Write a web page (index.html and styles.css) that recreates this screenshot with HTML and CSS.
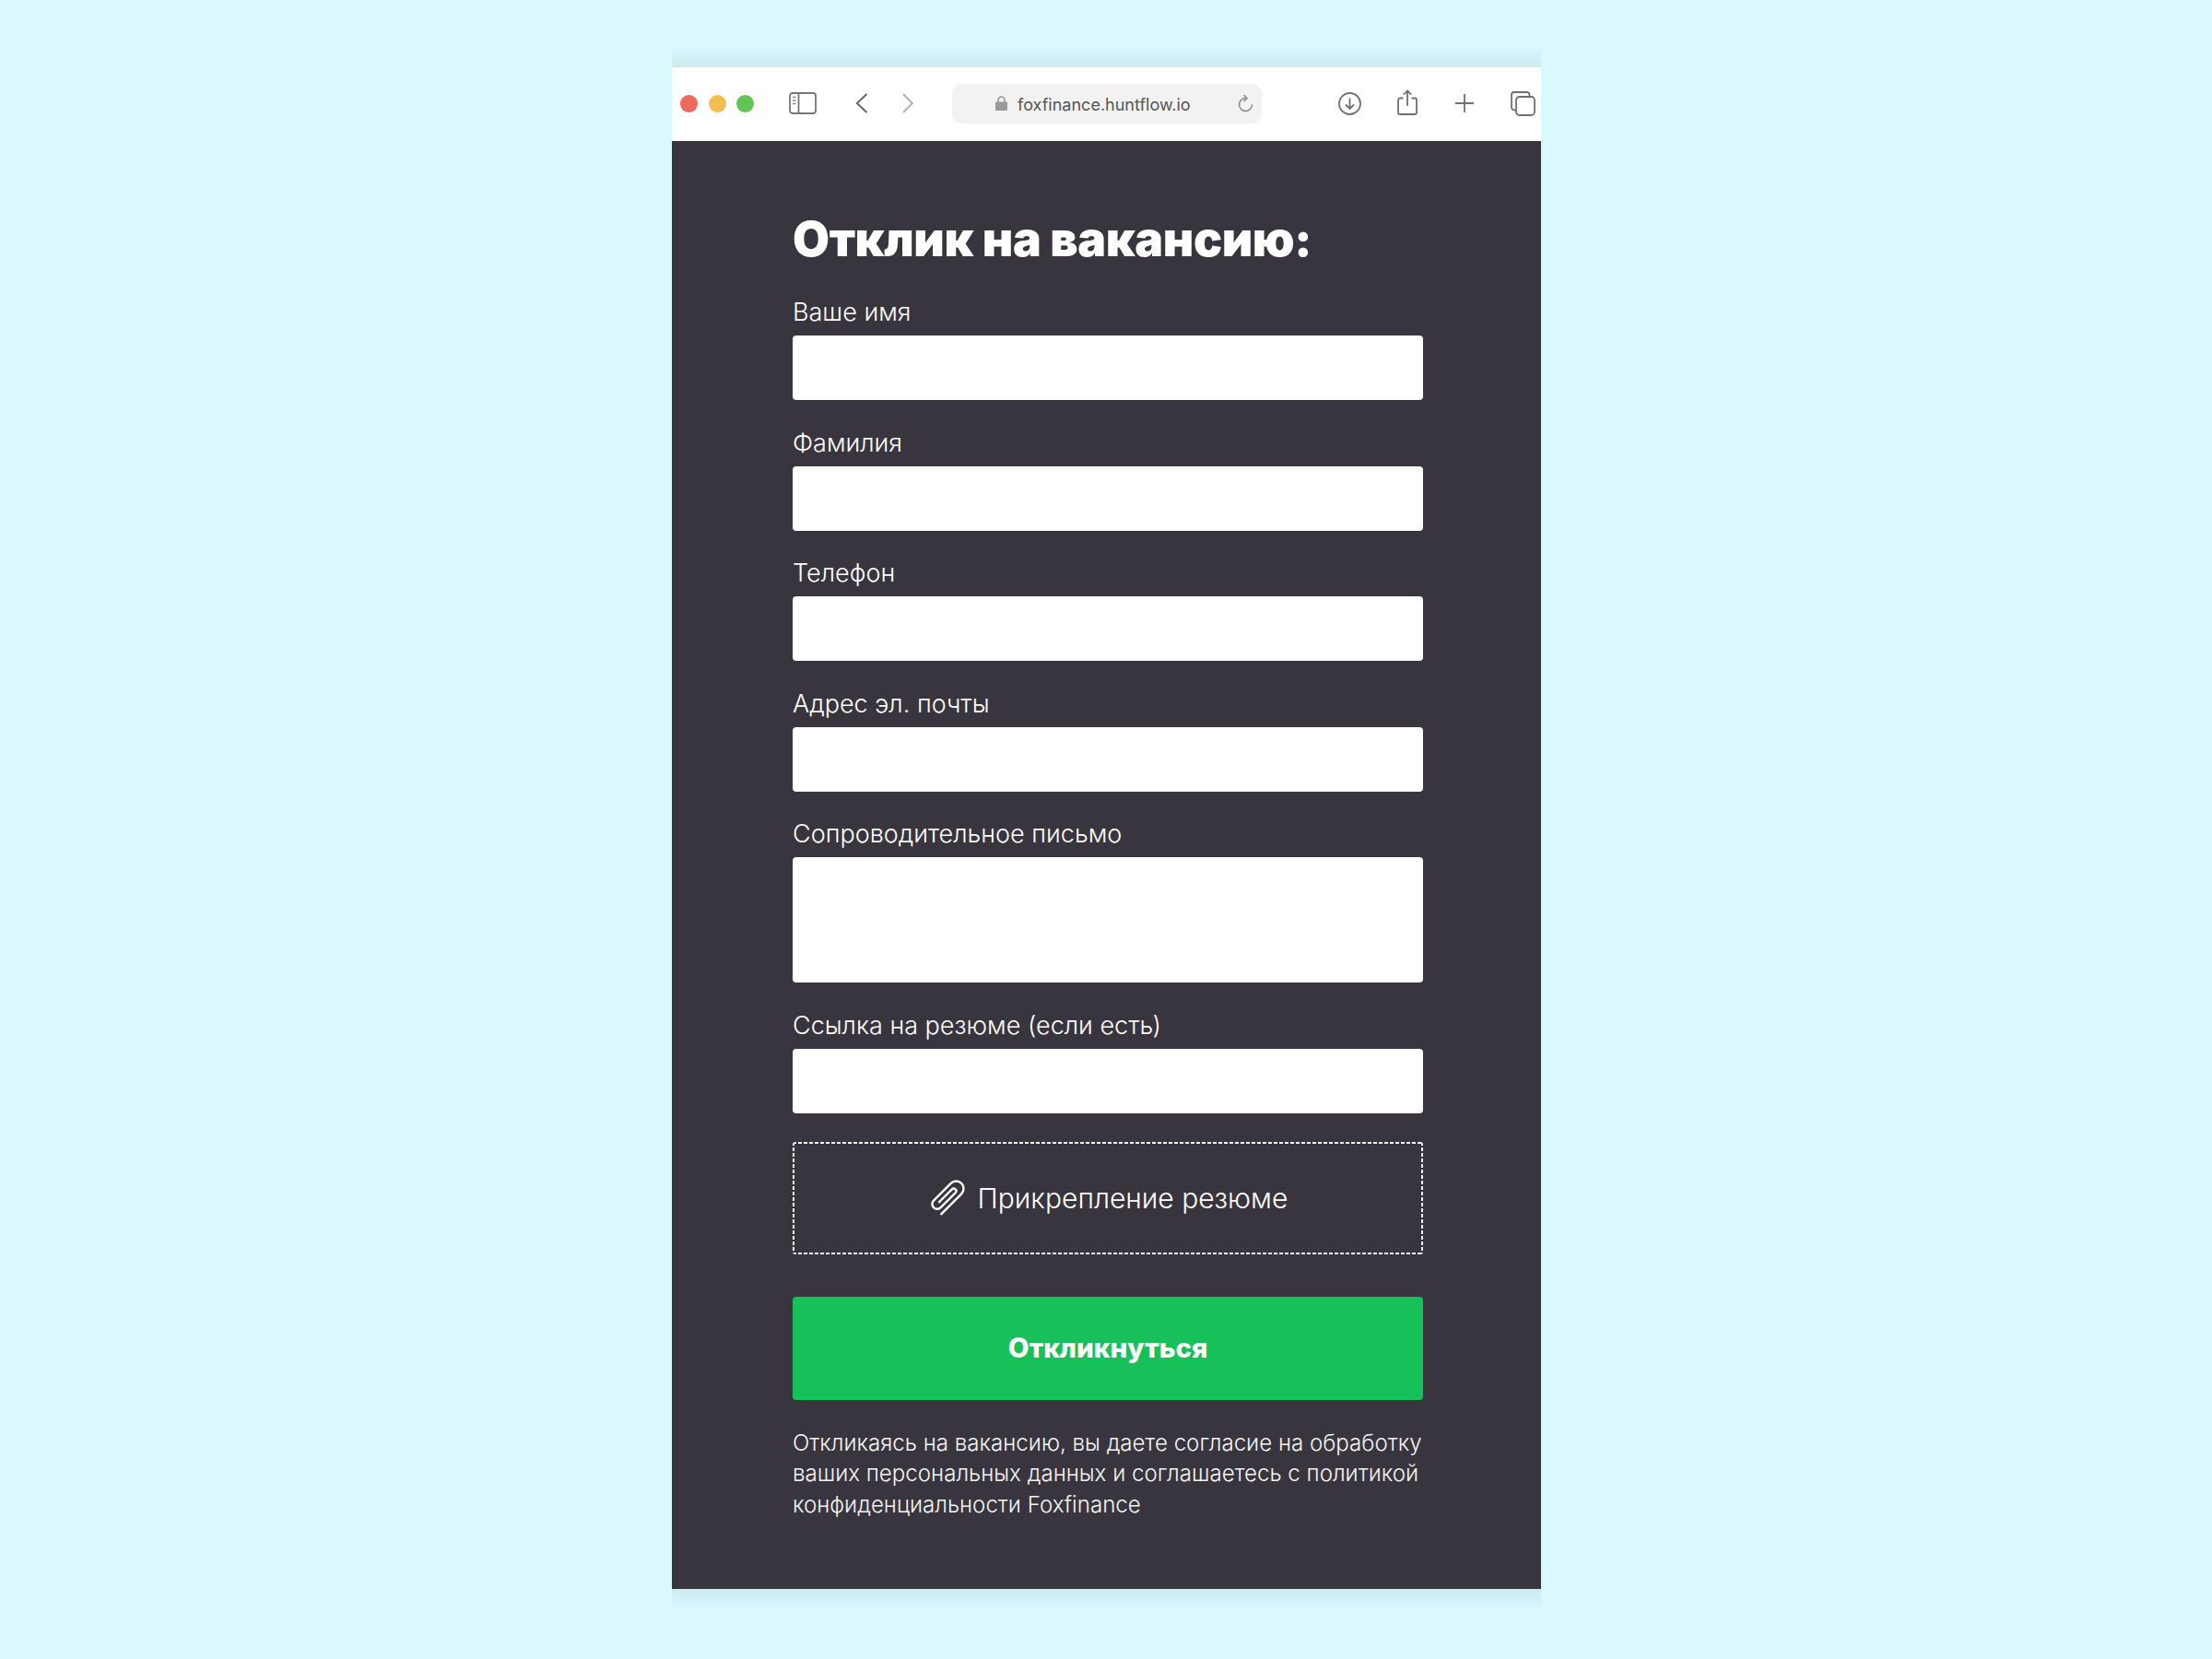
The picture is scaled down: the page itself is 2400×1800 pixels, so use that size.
FILE: index.html
```html
<!DOCTYPE html>
<html>
<head>
  <meta charset="UTF-8">
  <title>Отклик на вакансию</title>
  <link rel="stylesheet" href="styles.css">
</head>
<body>
  <div class="window">
    <div class="shade shade-top"></div>

    <div class="toolbar">
      <div class="traffic">
        <span class="dot dot-red"></span>
        <span class="dot dot-yellow"></span>
        <span class="dot dot-green"></span>
      </div>

      <svg class="icon icon-sidebar" width="30" height="24" viewBox="0 0 30 24">
        <rect x="1" y="1" width="28" height="22" rx="3" fill="none" stroke="#777" stroke-width="1.8"/>
        <path d="M10.500 1V23" stroke="#777" stroke-width="1.8"/>
        <path d="M4 5.500H7.500M4 9H7.500M4 12.500H7.500" stroke="#888" stroke-width="1.4"/>
      </svg>

      <svg class="icon icon-back" width="14" height="22" viewBox="0 0 14 22">
        <path d="M12.500 1L1.800 11L12.500 21" fill="none" stroke="#666" stroke-width="2"/>
      </svg>
      <svg class="icon icon-forward" width="12" height="22" viewBox="0 0 12 22">
        <path d="M1 1L10.800 11L1 21" fill="none" stroke="#b4b4b4" stroke-width="2"/>
      </svg>

      <div class="address">
        <svg class="icon-lock" width="13" height="16" viewBox="0 0 13 16">
          <path d="M3 7.500V4.500a3.500 3.500 0 0 1 7 0V7.500" fill="none" stroke="#999" stroke-width="1.700"/>
          <rect x="0" y="6.500" width="13" height="9.500" rx="1" fill="#999"/>
        </svg>
        <span class="url">foxfinance.huntflow.io</span>
        <svg class="icon-reload" width="17" height="20" viewBox="0 0 17 20">
          <path d="M8.500 4.500a7 7 0 1 0 7 7" fill="none" stroke="#888" stroke-width="1.500"/>
          <path d="M6.500 1L10 4.500L6.500 8" fill="none" stroke="#888" stroke-width="1.500"/>
        </svg>
      </div>

      <div class="toolbar-right">
        <svg class="icon" width="25" height="25" viewBox="0 0 25 25">
          <circle cx="12.500" cy="12.500" r="11.500" fill="none" stroke="#707070" stroke-width="1.800"/>
          <path d="M12.500 6.500V18M8 13.500L12.500 18L17 13.500" fill="none" stroke="#707070" stroke-width="1.800"/>
        </svg>
        <svg class="icon icon-share" width="22" height="28" viewBox="0 0 22 28">
          <path d="M6.500 9.500H3a2 2 0 0 0-2 2V25a2 2 0 0 0 2 2H19a2 2 0 0 0 2-2V11.500a2 2 0 0 0-2-2H15.500" fill="none" stroke="#707070" stroke-width="1.800"/>
          <path d="M11 18V1.500M6.800 5.700L11 1.500L15.200 5.700" fill="none" stroke="#707070" stroke-width="1.800"/>
        </svg>
        <svg class="icon" width="20" height="20" viewBox="0 0 20 20">
          <path d="M10 0V20M0 10H20" stroke="#707070" stroke-width="1.800"/>
        </svg>
        <svg class="icon" width="27" height="27" viewBox="0 0 27 27">
          <path d="M5.500 20.500H4a3 3 0 0 1-3-3V4a3 3 0 0 1 3-3H17.500a3 3 0 0 1 3 3V5.500" fill="none" stroke="#707070" stroke-width="1.800"/>
          <rect x="6" y="6" width="20" height="20" rx="3.500" fill="none" stroke="#707070" stroke-width="1.800"/>
        </svg>
      </div>
    </div>

    <div class="page">
      <h1>Отклик на вакансию:</h1>

      <div class="field">
        <label>Ваше имя</label>
        <div class="input"></div>
      </div>
      <div class="field">
        <label>Фамилия</label>
        <div class="input"></div>
      </div>
      <div class="field">
        <label>Телефон</label>
        <div class="input"></div>
      </div>
      <div class="field">
        <label>Адрес эл. почты</label>
        <div class="input"></div>
      </div>
      <div class="field">
        <label>Сопроводительное письмо</label>
        <div class="input input-big"></div>
      </div>
      <div class="field">
        <label>Ссылка на резюме (если есть)</label>
        <div class="input"></div>
      </div>

      <div class="attach">
        <svg width="41" height="39" viewBox="-19 -18 38 36">
          <path d="M7.500 18V-11.500a7.500 7.500 0 0 0-15 0V13a5 5 0 0 0 10 0V-8a2.500 2.500 0 0 0-5 0V11" fill="none" stroke="#fff" stroke-width="2.200" transform="rotate(45) translate(0 -1.500)"/>
        </svg>
        <span>Прикрепление резюме</span>
      </div>

      <button class="submit">Откликнуться</button>

      <p class="note">Откликаясь на вакансию, вы даете согласие на обработку ваших персональных данных и соглашаетесь с политикой конфиденциальности Foxfinance</p>
    </div>

    <div class="shade shade-bottom"></div>
  </div>
</body>
</html>
```

FILE: styles.css
```css
* {
  box-sizing: border-box;
  margin: 0;
  padding: 0;
}

body {
  background-color: #d9f9ff;
  font-family: "Inter", "Noto Sans", sans-serif;
}

.window {
  width: 943px;
  margin: 50px 0 0 729px;
}

.shade {
  height: 23px;
}

.shade-top {
  background: linear-gradient(to bottom, #d9f9ff, #cdeaee);
}

.shade-bottom {
  background: linear-gradient(to top, #d9f9ff, #cdeaee);
}

.toolbar {
  display: flex;
  align-items: center;
  height: 80px;
  padding: 0 0 2px 9px;
  background-color: #ffffff;
}

.traffic {
  display: flex;
  gap: 11.500px;
}

.dot {
  width: 19px;
  height: 19px;
  border-radius: 50%;
}

.dot-red {
  background-color: #ee6a5f;
}

.dot-yellow {
  background-color: #f5bd4f;
}

.dot-green {
  background-color: #61c454;
}

.icon {
  flex: none;
  display: block;
}

.icon-sidebar {
  margin-left: 38px;
}

.icon-back {
  margin-left: 42px;
}

.icon-forward {
  margin-left: 37px;
}

.address {
  display: flex;
  align-items: center;
  width: 336px;
  height: 43px;
  margin-left: 42px;
  padding: 0 9px 0 47px;
  background-color: #f2f2f2;
  border-radius: 10px;
}

.url {
  margin-left: 11px;
  padding-top: 2px;
  font-size: 18px;
  color: #555555;
  white-space: nowrap;
}

.icon-reload {
  margin-left: auto;
}

.toolbar-right {
  display: flex;
  align-items: center;
  gap: 40px;
  margin-left: 83px;
}

.icon-share {
  margin: -2px 1px 0 -1px;
}

.page {
  height: 1571px;
  padding: 76px 128px 0 131px;
  background-color: #38353e;
  color: #ffffff;
}

h1 {
  font-size: 51.700px;
  line-height: 60px;
  font-weight: 900;
  letter-spacing: -0.4px;
  margin-bottom: 34px;
}

.field {
  margin-bottom: 30.500px;
}

.field:last-of-type {
  margin-bottom: 0;
}

label {
  display: block;
  height: 41px;
  font-size: 27px;
  font-weight: 300;
  line-height: 31px;
}

.input {
  height: 70px;
  background-color: #ffffff;
  border-radius: 4px;
}

.input-big {
  height: 136px;
}

.attach {
  display: flex;
  align-items: center;
  justify-content: center;
  gap: 13px;
  height: 122px;
  margin-top: 31px;
  border-radius: 3px;
  font-size: 30px;
  font-weight: 300;
  background-image:
    repeating-linear-gradient(to right, #f2f2f2 0 4px, transparent 4px 6px),
    repeating-linear-gradient(to right, #f2f2f2 0 4px, transparent 4px 6px),
    repeating-linear-gradient(to bottom, #f2f2f2 0 4px, transparent 4px 6px),
    repeating-linear-gradient(to bottom, #f2f2f2 0 4px, transparent 4px 6px);
  background-size: 100% 2px, 100% 2px, 2px 100%, 2px 100%;
  background-position: top, bottom, left, right;
  background-repeat: no-repeat;
}

.submit {
  display: block;
  width: 100%;
  height: 112px;
  margin-top: 46px;
  padding-bottom: 2px;
  border: none;
  border-radius: 4px;
  background-color: #17c058;
  color: #ffffff;
  font-family: "Inter", "Noto Sans", sans-serif;
  font-size: 29.500px;
  font-weight: 800;
}

.note {
  margin-top: 30px;
  font-size: 24.100px;
  font-weight: 300;
  line-height: 33.500px;
  color: #f4f4f4;
}
```
